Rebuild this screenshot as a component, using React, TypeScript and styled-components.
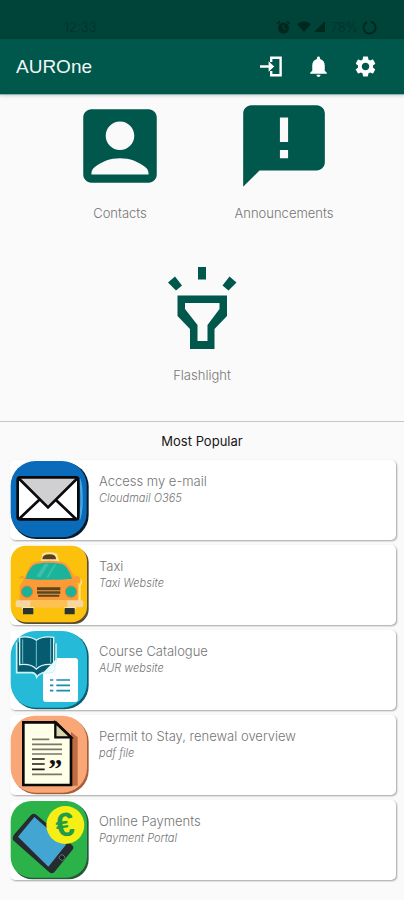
import React from "react";
import styled, { createGlobalStyle } from "styled-components";
import {
  MdAccountBox,
  MdAnnouncement,
  MdNotifications,
  MdSettings,
} from "react-icons/md";

const GlobalStyle = createGlobalStyle`
  * { box-sizing: border-box; }
  body {
    margin: 0;
    background: #fafafa;
    color: #757575;
    font-family: Inter, "Liberation Sans", sans-serif;
    font-weight: 300;
  }
`;

const StatusBar = styled.div`
  display: flex;
  align-items: flex-end;
  justify-content: space-between;
  height: 39px;
  padding: 0 27px 4px 64px;
  background: #004339;
  color: #00281f;
  font-size: 13px;
  line-height: 16px;
`;

const StatusText = styled.span`
  color: #003229;
`;

const StatusGroup = styled.div`
  display: flex;
  align-items: center;
  gap: 4px;
  height: 16px;
`;

const AppBar = styled.header`
  display: flex;
  align-items: center;
  justify-content: space-between;
  height: 56px;
  padding: 0 26px 0 16px;
  background: #00574b;
  border-bottom: 1px solid #8fb5ae;
  box-shadow: 0 1px 3px rgba(0, 0, 0, 0.16);
  color: #f2f8f6;
`;

const AppTitle = styled.h1`
  margin: 0;
  font-size: 19px;
  line-height: 24px;
  font-weight: 400;
  font-family: "Liberation Sans", sans-serif;
`;

const Actions = styled.nav`
  display: flex;
  gap: 22px;
`;

const IconButton = styled.button`
  display: block;
  width: 25px;
  height: 25px;
  padding: 0;
  border: 0;
  background: none;
  color: #fff;
  cursor: pointer;
  svg { display: block; width: 100%; height: 100%; }
`;

const Tiles = styled.section`
  display: flex;
  flex-wrap: wrap;
  justify-content: center;
  padding: 2px 38px 0;
  border-bottom: 1px solid #c4c9c8;
`;

const Tile = styled.button`
  display: flex;
  flex-direction: column;
  align-items: center;
  gap: 10px;
  flex: 0 0 50%;
  height: 162px;
  padding: 0;
  border: 0;
  background: none;
  color: #757575;
  font: inherit;
  font-size: 13px;
  line-height: 16px;
  cursor: pointer;
  svg { width: 98px; height: 98px; color: #00574b; }
`;

const SectionTitle = styled.h2`
  margin: 0;
  padding: 11px 0;
  text-align: center;
  color: #161616;
  font-size: 13px;
  line-height: 16px;
  font-weight: 400;
`;

const List = styled.ul`
  display: grid;
  gap: 5px;
  margin: 0;
  padding: 0 8px 20px 10px;
  list-style: none;
`;

const Card = styled.a`
  display: flex;
  gap: 9px;
  height: 80px;
  border-radius: 5px;
  background: #fff;
  box-shadow: 1px 1px 2px rgba(0, 0, 0, 0.35);
  color: #757575;
  text-decoration: none;
`;

const CardArt = styled.svg`
  display: block;
  flex: none;
  width: 80px;
  height: 80px;
`;

const CardText = styled.div`
  padding-top: 12px;
`;

const CardTitle = styled.div`
  font-size: 13px;
  line-height: 18px;
`;

const CardNote = styled.div`
  font-size: 11px;
  line-height: 16px;
  font-style: italic;
`;

const AlarmIcon = () => (
  <svg width="15" height="15" viewBox="0 0 15 15" fill="currentColor">
    <path
      fillRule="evenodd"
      d="M7.500 2.500a5.500 5.500 0 1 1 0 11a5.500 5.500 0 1 1 0-11zM6.900 5v3.500l2.600 1.700.6-.9-2-1.300V5z"
    />
    <path d="M1 4l3-2.600M14 4l-3-2.600" stroke="currentColor" strokeWidth="1.6" />
  </svg>
);

const LoginIcon = () => (
  <svg viewBox="0 0 25 25" fill="none" stroke="currentColor" strokeWidth="2.4">
    <path d="M12.2 8V3.700h9.400v17.600h-9.400V17M1 12.500h12" />
    <path d="M9.600 7.200l5.600 5.300-5.600 5.300z" fill="currentColor" stroke="none" />
  </svg>
);

const FlashlightIcon = () => (
  <svg viewBox="0 0 98 98" fill="currentColor">
    <path
      fillRule="evenodd"
      d="M24.5 36.500h49.500V57L61.500 70v20h-24.500V70L24.500 57zM32 44v6l12.500 16v16h10V66L66.500 50v-6z"
    />
    <path d="M45 8h8v12.500h-8zM22 17.500l-7 6 8 8 6-5zM76.500 17.500l7 6-8 8-6-5z" />
  </svg>
);

const MailArt = () => (
  <>
    <rect x="36" y="22" width="230" height="230" rx="72" fill="#071a2c" />
    <rect x="32" y="18" width="228" height="229" rx="74" fill="#096bb9" />
    <path d="M238 72c9 25 9 95 0 120" fill="none" stroke="#4ba8df" strokeWidth="7" />
    <rect x="53" y="67" width="182" height="126" rx="7" fill="#fff" />
    <path d="M55 69h178l-89 88z" fill="#d0d0d3" />
    <path
      d="M55 69l89 88 89-88M58 191l60-57M227 191l-60-57"
      fill="none"
      stroke="#080a0c"
      strokeWidth="8"
    />
    <rect x="53" y="67" width="182" height="126" rx="8" fill="none" stroke="#080a0c" strokeWidth="8" />
  </>
);

const TaxiArt = () => (
  <>
    <rect x="37" y="23" width="229" height="229" rx="44" fill="#594d34" />
    <rect x="32" y="17" width="229" height="230" rx="46" fill="#fbc10d" />
    <path d="M122 66l5-25q21-8 44 0l7 25z" fill="#ffe4a0" />
    <path d="M127 58q0-15 21-15t20 15z" fill="#57411e" />
    <path d="M232 112q19 9 7 25v58h-26v28" fill="none" stroke="#ffe28c" strokeWidth="6" />
    <path d="M60 116q4-11 14-2M222 114q10-9 17 2v10h-16z" fill="#fb9b38" stroke="#fb9b38" strokeWidth="5" />
    <path d="M74 114q15-45 31-48 42-7 84 0 16 3 35 48l9 24v47H59v-47z" fill="#fb9b38" />
    <path d="M76 116q13-39 32-44 39-7 78 0 17 4 30 44-68 7-140 0z" fill="#1bb49a" />
    <path d="M109 110l25-39h13l-25 40zM139 112l25-41h6l-25 42z" fill="#3dc0ab" />
    <circle cx="81" cy="155" r="17" fill="#18b39b" stroke="#db8028" strokeWidth="3" />
    <circle cx="213" cy="155" r="17" fill="#18b39b" stroke="#db8028" strokeWidth="3" />
    <path d="M111 142h70v9h-70zM111 154h70v7h-70zM114 164h64v6h-64z" fill="#5b4521" />
    <rect x="47" y="181" width="203" height="21" rx="6" fill="#f6d6a3" />
    <path d="M91 181h111v21H91z" fill="#ffc052" />
    <path d="M66 202h36v5H66zM192 202h36v5h-36z" fill="#fff0bd" />
    <path d="M69 204h31v19H69zM194 204h30v19h-30z" fill="#29342f" />
  </>
);

const CourseArt = () => (
  <>
    <rect x="37" y="22" width="229" height="231" rx="72" fill="#0b5e70" />
    <rect x="32" y="18" width="229" height="230" rx="74" fill="#25bbd8" />
    <path d="M50 52v91h46q12 2 14 13 6-9 18-13h40V55" fill="#075b70" stroke="#c9f2f5" strokeWidth="5" />
    <path
      d="M59 37q31-5 50 9 19-14 52-9v82q-35-4-52 13-16-17-50-13z"
      fill="#075b70"
      stroke="#d9f6f6"
      strokeWidth="4"
    />
    <path d="M68 43v72M109 49v76M152 41v72" fill="none" stroke="#70c4d0" strokeWidth="3" />
    <path d="M172 99h53q9 0 9 10v113q0 9-9 9h-87q-9 0-9-9v-75z" fill="#fff" />
    <path d="M128 145l42-43-7 34q-1 8-12 8z" fill="#e9fbfc" stroke="#bceef3" strokeWidth="2" />
    <path
      d="M150 165h10m9 0h41M150 181h10m9 0h41M150 197h10m9 0h41"
      fill="none"
      stroke="#168eaa"
      strokeWidth="5"
    />
  </>
);

const PermitArt = () => (
  <>
    <rect x="37" y="23" width="229" height="230" rx="72" fill="#a65f38" />
    <rect x="32" y="17" width="229" height="231" rx="74" fill="#f9a777" />
    <path d="M213 65l20 17v145H91v-8h122z" fill="#bd6c44" />
    <path d="M70 37h97l46 45v143H70z" fill="#fffee6" stroke="#090909" strokeWidth="8" />
    <path d="M166 38v44h47z" fill="#d8d6ad" stroke="#090909" strokeWidth="7" />
    <path d="M96 88h52M96 103h90M96 118h90M96 132h90M96 193h90" stroke="#77776c" strokeWidth="5" />
    <path d="M96 147h38M96 162h38M96 178h38" stroke="#1b1b19" strokeWidth="5" />
    <text x="145" y="205" fontFamily="Liberation Serif, serif" fontWeight="700" fontSize="84" fill="#111">
      ”
    </text>
  </>
);

const PaymentArt = () => (
  <>
    <rect x="37" y="23" width="229" height="230" rx="60" fill="#28573a" />
    <rect x="32" y="18" width="229" height="230" rx="62" fill="#2bb34a" />
    <path
      d="M42 119L91 62q8-9 18-3l107 91q8 7 1 15l-53 65q-7 8-16 2L41 137q-6-8 1-18z"
      fill="#252b2f"
    />
    <path d="M54 125l49-59 95 83-53 66z" fill="#43a5d2" />
    <rect x="179" y="180" width="15" height="15" rx="5" transform="rotate(40 186 187)" fill="#1d2225" stroke="#87908f" strokeWidth="2" />
    <circle cx="196" cy="90" r="57" fill="#f5ef16" />
    <text
      x="195"
      y="123"
      textAnchor="middle"
      transform="rotate(-8 195 90)"
      fontFamily="Liberation Sans, sans-serif"
      fontWeight="700"
      fontSize="100"
      fill="#219d48"
    >
      €
    </text>
  </>
);

const links = [
  { title: "Access my e-mail", note: "Cloudmail O365", Art: MailArt },
  { title: "Taxi", note: "Taxi Website", Art: TaxiArt },
  { title: "Course Catalogue", note: "AUR website", Art: CourseArt },
  { title: "Permit to Stay, renewal overview", note: "pdf file", Art: PermitArt },
  { title: "Online Payments", note: "Payment Portal", Art: PaymentArt },
];

export default function App() {
  return (
    <>
      <GlobalStyle />
      <StatusBar>
        <StatusText>12:33</StatusText>
        <StatusGroup>
          <AlarmIcon />
          <svg width="32" height="14" viewBox="0 0 32 14" fill="currentColor">
            <path d="M2 4q7-5 14 0L9 12zM30 1v11H19z" />
          </svg>
          <StatusText>78%</StatusText>
          <svg width="15" height="15" viewBox="0 0 15 15" fill="none" stroke="currentColor" strokeWidth="2">
            <path d="M9 1.700a6 6 0 1 1-4 .4" />
          </svg>
        </StatusGroup>
      </StatusBar>
      <AppBar>
        <AppTitle>AUROne</AppTitle>
        <Actions>
          <IconButton aria-label="Log in"><LoginIcon /></IconButton>
          <IconButton aria-label="Notifications"><MdNotifications /></IconButton>
          <IconButton aria-label="Settings"><MdSettings /></IconButton>
        </Actions>
      </AppBar>
      <main>
        <Tiles>
          <Tile><MdAccountBox />Contacts</Tile>
          <Tile><MdAnnouncement />Announcements</Tile>
          <Tile><FlashlightIcon />Flashlight</Tile>
        </Tiles>
        <SectionTitle>Most Popular</SectionTitle>
        <List>
          {links.map(({ title, note, Art }) => (
            <li key={title}>
              <Card href="#">
                <CardArt viewBox="30 15 240 240" aria-hidden="true"><Art /></CardArt>
                <CardText>
                  <CardTitle>{title}</CardTitle>
                  <CardNote>{note}</CardNote>
                </CardText>
              </Card>
            </li>
          ))}
        </List>
      </main>
    </>
  );
}
